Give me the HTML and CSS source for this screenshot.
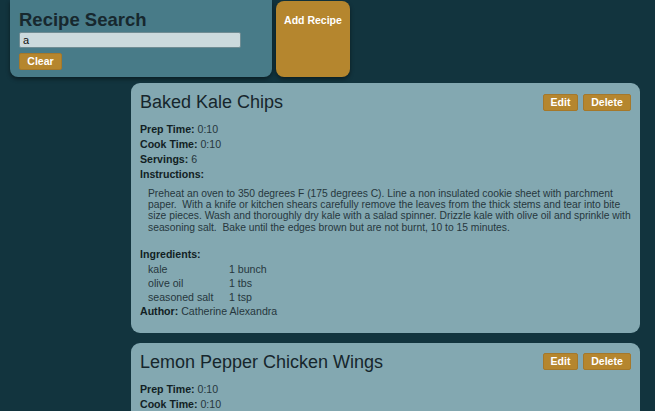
FILE: index.html
```html
<!DOCTYPE html>
<html>
<head>
<meta charset="utf-8">
<link rel="stylesheet" href="styles.css">
</head>
<body>
<div class="top">
  <div class="search">
    <h1 class="search-title">Recipe Search</h1>
    <input class="search-input" type="text" value="a">
    <div><button class="btn clear">Clear</button></div>
  </div>
  <div class="add">Add Recipe</div>
</div>
<div class="list">
  <div class="card">
    <div class="card-head">
      <h2 class="card-title">Baked Kale Chips</h2>
      <div class="actions"><button class="btn edit">Edit</button><button class="btn del">Delete</button></div>
    </div>
    <div class="row"><b>Prep Time:</b> 0:10</div>
    <div class="row"><b>Cook Time:</b> 0:10</div>
    <div class="row"><b>Servings:</b> 6</div>
    <div class="row"><b>Instructions:</b></div>
    <p class="instructions">Preheat an oven to 350 degrees F (175 degrees C). Line a non insulated cookie sheet with parchment paper.  With a knife or kitchen shears carefully remove the leaves from the thick stems and tear into bite size pieces. Wash and thoroughly dry kale with a salad spinner. Drizzle kale with olive oil and sprinkle with seasoning salt.  Bake until the edges brown but are not burnt, 10 to 15 minutes.</p>
    <div class="row"><b>Ingredients:</b></div>
    <div class="ingredients">
      <div class="ing"><span class="ing-name">kale</span><span>1 bunch</span></div>
      <div class="ing"><span class="ing-name">olive oil</span><span>1 tbs</span></div>
      <div class="ing"><span class="ing-name">seasoned salt</span><span>1 tsp</span></div>
    </div>
    <div class="row"><b>Author:</b> Catherine Alexandra</div>
  </div>
  <div class="card card-last">
    <div class="card-head">
      <h2 class="card-title">Lemon Pepper Chicken Wings</h2>
      <div class="actions"><button class="btn edit">Edit</button><button class="btn del">Delete</button></div>
    </div>
    <div class="row"><b>Prep Time:</b> 0:10</div>
    <div class="row"><b>Cook Time:</b> 0:10</div>
  </div>
</div>
</body>
</html>
```
FILE: styles.css
```css
html, body {
  margin: 0;
  padding: 0;
  background: #12343e;
  font-family: "Liberation Sans", Arial, sans-serif;
  color: #1b2b31;
  overflow: hidden;
  height: 411px;
}
.top {
  display: flex;
  gap: 4px;
  padding-left: 10px;
  align-items: flex-start;
}
.search {
  width: 262px;
  box-sizing: border-box;
  padding: 9px 9px 7px 9px;
  background: #487b88;
  border-radius: 0 0 8px 8px;
  box-shadow: 0 2px 4px rgba(0, 0, 0, 0.45);
}
.search-title {
  margin: 0;
  font-size: 18.5px;
  line-height: 22px;
  font-weight: bold;
  color: #17282e;
}
.search-input {
  display: block;
  margin: 1px 0 0 0;
  width: 222px;
  height: 16px;
  box-sizing: border-box;
  padding: 0 3px;
  border: 1px solid #6f8c93;
  border-radius: 2px;
  background: #cbdadd;
  font-family: "Liberation Sans", Arial, sans-serif;
  font-size: 11px;
  color: #111;
}
.btn {
  font-family: "Liberation Sans", Arial, sans-serif;
  font-weight: bold;
  font-size: 10.5px;
  color: #fff;
  background: #b5862e;
  border: 1px solid #a5782a;
  border-radius: 2px;
  height: 17px;
  padding: 0;
  line-height: 15px;
  cursor: pointer;
}
.clear {
  margin-top: 5px;
  width: 43px;
}
.add {
  width: 74px;
  height: 76px;
  margin-top: 1px;
  box-sizing: border-box;
  padding-top: 13px;
  background: #b5862e;
  border-radius: 8px;
  box-shadow: 0 2px 4px rgba(0, 0, 0, 0.45);
  color: #fff;
  font-weight: bold;
  font-size: 10.5px;
  text-align: center;
}
.list {
  margin-left: 131px;
  width: 509px;
  margin-top: 6px;
  display: flex;
  flex-direction: column;
  gap: 10px;
}
.card {
  background: #83a8b1;
  border-radius: 9px;
  padding: 8px 9px 14px 9px;
  font-size: 10.6px;
}
.card-last {
  padding-bottom: 20px;
}
.card-head {
  display: flex;
  justify-content: space-between;
  align-items: center;
  height: 22px;
  margin-bottom: 9px;
}
.card-title {
  margin: 0;
  font-size: 18px;
  line-height: 22px;
  font-weight: normal;
  color: #16262c;
}
.actions {
  display: flex;
  gap: 5px;
}
.edit { width: 35px; }
.del { width: 48px; }
.row {
  line-height: 15px;
  color: #26373d;
}
.row b {
  color: #121f24;
}
.instructions {
  margin: 5.5px 0 13.5px 8px;
  line-height: 11.4px;
  white-space: pre-wrap;
  color: #26373d;
  font-size: 10.3px;
}
.ingredients {
  padding-left: 8px;
}
.ing {
  display: flex;
  line-height: 14px;
  color: #26373d;
}
.ing-name {
  width: 81px;
}
```
